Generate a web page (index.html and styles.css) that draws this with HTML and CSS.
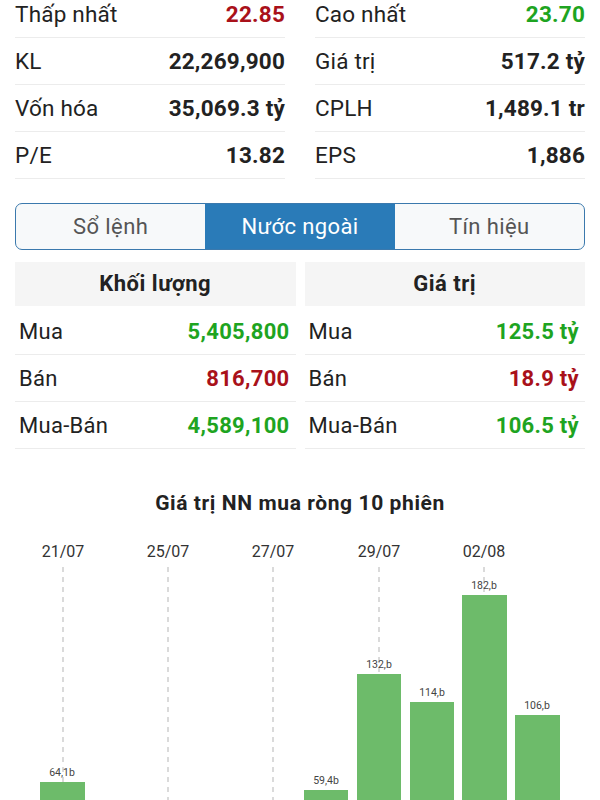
FILE: index.html
```html
<!DOCTYPE html>
<html lang="vi">
<head>
  <meta charset="UTF-8">
  <meta name="viewport" content="width=device-width, initial-scale=1.0">
  <title>Nước ngoài</title>
  <link rel="stylesheet" href="styles.css">
</head>
<body>

<div class="page">
  <!-- Thong tin chung -->
  <div class="stats">
    <div class="stat"><span class="label">Thấp nhất</span><span class="value down">22.85</span></div>
    <div class="stat"><span class="label">Cao nhất</span><span class="value up">23.70</span></div>
    <div class="stat"><span class="label">KL</span><span class="value">22,269,900</span></div>
    <div class="stat"><span class="label">Giá trị</span><span class="value">517.2 tỷ</span></div>
    <div class="stat"><span class="label">Vốn hóa</span><span class="value">35,069.3 tỷ</span></div>
    <div class="stat"><span class="label">CPLH</span><span class="value">1,489.1 tr</span></div>
    <div class="stat"><span class="label">P/E</span><span class="value">13.82</span></div>
    <div class="stat"><span class="label">EPS</span><span class="value">1,886</span></div>
  </div>

  <!-- Tabs -->
  <div class="tabs">
    <div class="tab">Sổ lệnh</div>
    <div class="tab active">Nước ngoài</div>
    <div class="tab">Tín hiệu</div>
  </div>

  <!-- Khoi ngoai -->
  <div class="foreign">
    <div class="foreign-col">
      <div class="foreign-head">Khối lượng</div>
      <div class="foreign-row"><span>Mua</span><span class="value up">5,405,800</span></div>
      <div class="foreign-row"><span>Bán</span><span class="value down">816,700</span></div>
      <div class="foreign-row"><span>Mua-Bán</span><span class="value up">4,589,100</span></div>
    </div>
    <div class="foreign-col">
      <div class="foreign-head">Giá trị</div>
      <div class="foreign-row"><span>Mua</span><span class="value up">125.5 tỷ</span></div>
      <div class="foreign-row"><span>Bán</span><span class="value down">18.9 tỷ</span></div>
      <div class="foreign-row"><span>Mua-Bán</span><span class="value up">106.5 tỷ</span></div>
    </div>
  </div>

  <!-- Bieu do -->
  <div class="chart-title">Giá trị NN mua ròng 10 phiên</div>
  <svg class="chart" width="600" height="360" viewBox="0 0 600 360">
    <g class="grid">
      <line x1="63" y1="37" x2="63" y2="360"/>
      <line x1="168" y1="37" x2="168" y2="360"/>
      <line x1="273" y1="37" x2="273" y2="360"/>
      <line x1="379" y1="37" x2="379" y2="360"/>
      <line x1="484" y1="37" x2="484" y2="360"/>
    </g>
    <g class="dates">
      <text x="63" y="27">21/07</text>
      <text x="168" y="27">25/07</text>
      <text x="273" y="27">27/07</text>
      <text x="379" y="27">29/07</text>
      <text x="484" y="27">02/08</text>
    </g>
    <g class="bars">
      <rect x="40" y="252" width="45" height="120"/>
      <rect x="304" y="260" width="44" height="120"/>
      <rect x="357" y="144" width="44" height="220"/>
      <rect x="410" y="172" width="44" height="200"/>
      <rect x="462" y="65" width="45" height="300"/>
      <rect x="515" y="185" width="45" height="200"/>
    </g>
    <g class="bar-labels">
      <text x="62" y="246">64,1b</text>
      <text x="326" y="254">59,4b</text>
      <text x="379" y="138">132,b</text>
      <text x="432" y="166">114,b</text>
      <text x="484" y="59">182,b</text>
      <text x="537" y="179">106,b</text>
    </g>
  </svg>
</div>

</body>
</html>
```

FILE: styles.css
```css
/* Trang chi tiet co phieu - tab nuoc ngoai */
body {
  margin: 0;
  background: #fff;
  font-family: Roboto, "Noto Sans", Arial, sans-serif;
  color: #222;
  overflow: hidden;
}

.page {
  margin-top: -9px;
}

.value {
  font-weight: bold;
}

.up {
  color: #1ea421;
}

.down {
  color: #a9111a;
}

/* thong tin chung */
.stats {
  display: grid;
  grid-template-columns: 1fr 1fr;
  column-gap: 30px;
  padding: 0 15px;
}

.stat {
  display: flex;
  justify-content: space-between;
  align-items: center;
  height: 46px;
  border-bottom: 1px solid #ececec;
  font-size: 22.5px;
  letter-spacing: 0.2px;
}

/* tabs */
.tabs {
  display: flex;
  margin: 24px 15px 0;
  height: 45px;
  border: 1.5px solid #3b79ad;
  border-radius: 7px;
  overflow: hidden;
  background: #f7f9fa;
}

.tab {
  flex: 1;
  display: flex;
  align-items: center;
  justify-content: center;
  font-size: 22px;
  letter-spacing: 0.4px;
  color: #555;
}

.tab.active {
  background: #2a7bb8;
  color: #fff;
}

/* khoi ngoai */
.foreign {
  display: flex;
  gap: 9px;
  margin: 12px 15px 0;
}

.foreign-col {
  flex: 1;
}

.foreign-head {
  height: 44px;
  line-height: 44px;
  background: #f5f5f5;
  text-align: center;
  font-size: 22px;
  letter-spacing: 0.5px;
  font-weight: bold;
  margin-bottom: 2px;
}

.foreign-row {
  display: flex;
  justify-content: space-between;
  align-items: center;
  height: 46px;
  padding: 0 6px 0 4px;
  border-bottom: 1px solid #ececec;
  font-size: 22px;
  letter-spacing: 0.3px;
}

/* bieu do */
.chart-title {
  margin-top: 39px;
  height: 30px;
  line-height: 30px;
  text-align: center;
  font-size: 21px;
  letter-spacing: 0.6px;
  font-weight: bold;
  color: #222;
}

.chart {
  display: block;
  margin-top: 12px;
}

.grid line {
  stroke: #b5b5b5;
  stroke-width: 1;
  stroke-dasharray: 5 5;
}

.dates text {
  font-size: 16px;
  fill: #333;
  text-anchor: middle;
}

.bars rect {
  fill: #6dbb6a;
}

.bar-labels text {
  font-size: 10.5px;
  fill: #444;
  text-anchor: middle;
}
```
